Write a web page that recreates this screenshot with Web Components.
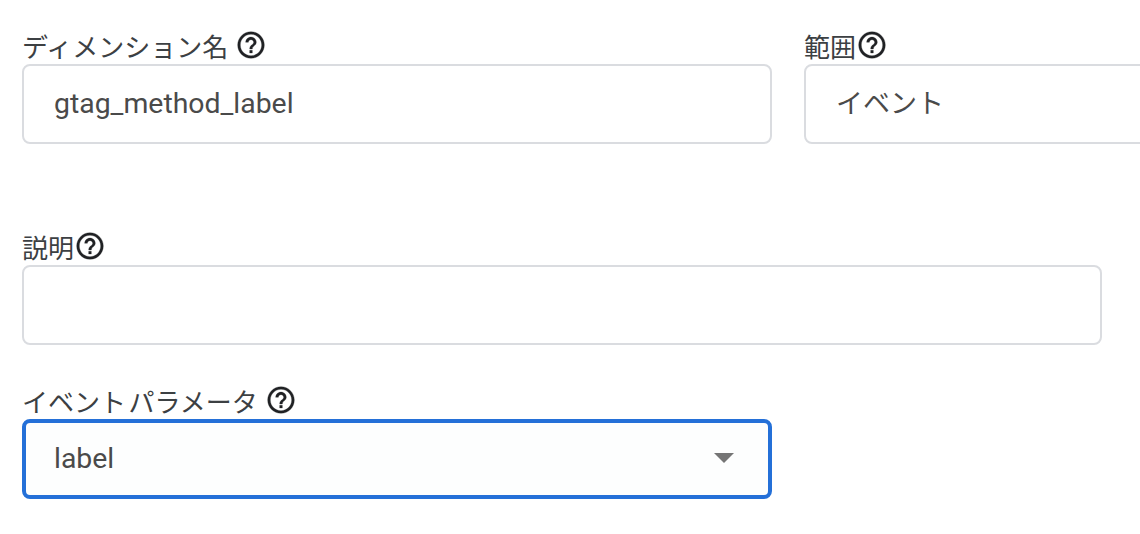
<!DOCTYPE html>
<html lang="ja">
<head>
<meta charset="utf-8">
<title>カスタム ディメンション</title>
<style>
    html, body { margin: 0; height: 100%; overflow: hidden; background: #fff; }
    body { font-family: Roboto, "Noto Sans CJK JP", sans-serif; }
</style>
</head>
<body>
<dimension-form>
    <form-row>
        <form-field label="ディメンション名" gap="7" style="width: 750px">
            <text-box>gtag_method_label</text-box>
        </form-field>
        <form-field label="範囲" gap="0" style="width: 400px">
            <text-box style="font-size: 27px; padding-bottom: 5px">イベント</text-box>
        </form-field>
    </form-row>
    <form-field label="説明" gap="0" style="width: 1080px; margin-top: 86px">
        <text-box></text-box>
    </form-field>
    <form-field label="イベント パラメータ" gap="7" style="width: 750px; margin-top: 39px">
        <text-box focused dropdown>label</text-box>
    </form-field>
</dimension-form>

<script>
class HelpIcon extends HTMLElement {
    constructor() {
        super();
        this.attachShadow({ mode: 'open' });
    }

    connectedCallback() {
        this.shadowRoot.innerHTML = `
            <style>
                :host { display: block; width: 32px; height: 32px; color: #202124; flex: none; }
                svg { display: block; width: 100%; height: 100%; fill: currentColor; stroke: currentColor; stroke-width: .2; }
            </style>
            <svg viewBox="0 0 24 24"><path d="M11 18h2v-2h-2v2zm1-16C6.48 2 2 6.48 2 12s4.48 10 10 10 10-4.48 10-10S17.52 2 12 2zm0 18c-4.41 0-8-3.59-8-8s3.59-8 8-8 8 3.59 8 8-3.59 8-8 8zm0-14c-2.21 0-4 1.79-4 4h2c0-1.1.9-2 2-2s2 .9 2 2c0 2-3 1.75-3 5h2c0-2.25 3-2.5 3-5 0-2.21-1.79-4-4-4z"/></svg>
        `;
    }
}

class TextBox extends HTMLElement {
    constructor() {
        super();
        this.attachShadow({ mode: 'open' });
    }

    connectedCallback() {
        this.shadowRoot.innerHTML = `
            <style>
                :host {
                    display: flex;
                    align-items: center;
                    box-sizing: border-box;
                    height: 80px;
                    padding: 0 30px 2px;
                    border: 2px solid #dadce0;
                    border-radius: 8px;
                    background: #fff;
                    color: #4a4a4a;
                    font-size: 28.4px;
                }
                :host([focused]) {
                    border: 4px solid #2470d8;
                    padding: 0 28px 2px;
                    background: #fdfefe;
                }
                .value { flex: 1; white-space: nowrap; }
                .arrow {
                    display: none;
                    width: 0;
                    height: 0;
                    margin-right: 6px;
                    border-left: 10px solid transparent;
                    border-right: 10px solid transparent;
                    border-top: 10px solid #757575;
                }
                :host([dropdown]) .arrow { display: block; }
            </style>
            <span class="value"><slot></slot></span>
            <span class="arrow"></span>
        `;
    }
}

class FormField extends HTMLElement {
    constructor() {
        super();
        this.attachShadow({ mode: 'open' });
    }

    connectedCallback() {
        const label = this.getAttribute('label');
        const gap = this.getAttribute('gap') || 0;
        this.shadowRoot.innerHTML = `
            <style>
                :host { display: block; flex: none; }
                .label {
                    display: flex;
                    align-items: center;
                    gap: ${gap}px;
                    box-sizing: border-box;
                    height: 35px;
                    padding-bottom: 4px;
                    color: #3c4043;
                    font-size: 26px;
                    word-spacing: -4px;
                    white-space: nowrap;
                }
                .label span { padding-top: 2px; }
            </style>
            <div class="label"><span>${label}</span><help-icon></help-icon></div>
            <slot></slot>
        `;
    }
}

class FormRow extends HTMLElement {
    constructor() {
        super();
        this.attachShadow({ mode: 'open' });
    }

    connectedCallback() {
        this.shadowRoot.innerHTML = `
            <style>
                :host { display: flex; gap: 32px; }
            </style>
            <slot></slot>
        `;
    }
}

class DimensionForm extends HTMLElement {
    constructor() {
        super();
        this.attachShadow({ mode: 'open' });
    }

    connectedCallback() {
        this.shadowRoot.innerHTML = `
            <style>
                :host { display: block; padding: 29px 0 0 22px; }
            </style>
            <slot></slot>
        `;
    }
}

customElements.define('help-icon', HelpIcon);
customElements.define('text-box', TextBox);
customElements.define('form-field', FormField);
customElements.define('form-row', FormRow);
customElements.define('dimension-form', DimensionForm);
</script>
</body>
</html>
